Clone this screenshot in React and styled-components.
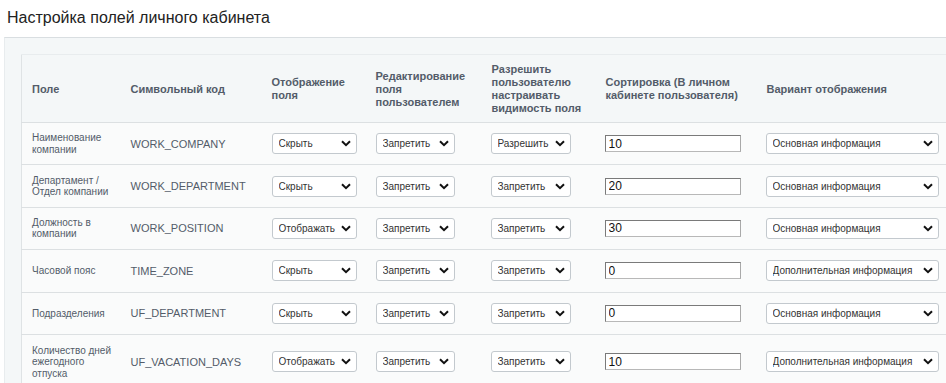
import React from 'react';
import styled, { createGlobalStyle } from 'styled-components';

const GlobalStyle = createGlobalStyle`
  html, body {
    margin: 0;
    padding: 0;
    background: #fff;
    font-family: Arial, "Liberation Sans", sans-serif;
    overflow: hidden;
  }
`;

const Page = styled.div`
  width: 946px;
  height: 383px;
  overflow: hidden;
`;

const Title = styled.h1`
  margin: 0;
  padding: 8px 0 0 7px;
  height: 29px;
  font-size: 16px;
  font-weight: normal;
  color: #222;
  line-height: 20px;
`;

const Panel = styled.div`
  margin-left: 4px;
  border-top: 1px solid #d9dee1;
  border-left: 1px solid #e8ecee;
  background: #f4f7f8;
  padding: 16px 0 0 16px;
  height: 400px;
`;

const Table = styled.table`
  border-collapse: collapse;
  table-layout: fixed;
  width: 935px;
  border-left: 1px solid #dfe3e5;
  border-top: 1px solid #e8ecee;
`;

const HeadCell = styled.th`
  height: 66px;
  padding: 1px 10px 0;
  text-align: left;
  vertical-align: middle;
  font-size: 11px;
  line-height: 13px;
  font-weight: bold;
  color: #535c69;
  border-bottom: 1px solid #dce0e2;
`;

const Row = styled.tr`
  background: #fafbfb;
  height: ${(p) => (p.$tall ? '55px' : '42.4px')};
  & > td {
    border-bottom: 1px solid #dce0e2;
  }
`;

const Cell = styled.td`
  padding: 0 ${(p) => (p.$small ? 4 : 10)}px 0 ${(p) => p.$pl || 10}px;
  vertical-align: middle;
  font-size: ${(p) => (p.$small ? '10px' : '11px')};
  line-height: ${(p) => (p.$small ? '11.5px' : '12px')};
  color: #535c69;
`;

const SelectWrap = styled.div`
  position: relative;
  width: ${(p) => p.$w}px;
  height: 21px;
`;

const Select = styled.select`
  appearance: none;
  width: 100%;
  height: 21px;
  box-sizing: border-box;
  border: 1px solid #c3c9ce;
  border-radius: 3px;
  background: #fff;
  padding: 0 18px 0 6px;
  font-family: Arial, "Liberation Sans", sans-serif;
  font-size: 10px;
  color: #333;
  outline: none;
`;

const Chevron = styled.svg`
  position: absolute;
  right: 6px;
  top: 7px;
  width: 10px;
  height: 7px;
  pointer-events: none;
`;

const Input = styled.input`
  width: 136px;
  height: 17px;
  box-sizing: border-box;
  border: 1px solid #7a7a7a;
  border-right-color: #a9a9a9;
  border-bottom-color: #b8b8b8;
  padding: 0 3px;
  font-family: Arial, "Liberation Sans", sans-serif;
  font-size: 12px;
  color: #111;
  background: #fff;
  outline: none;
`;

const Dropdown = ({ w, value, options }) => (
  <SelectWrap $w={w}>
    <Select defaultValue={value}>
      {options.map((o) => (
        <option key={o}>{o}</option>
      ))}
    </Select>
    <Chevron viewBox="0 0 10 7">
      <path d="M1 1.2 L5 5.2 L9 1.2" fill="none" stroke="#111" strokeWidth="2" />
    </Chevron>
  </SelectWrap>
);

const SHOW = ['Скрыть', 'Отображать'];
const PERM = ['Запретить', 'Разрешить'];
const VIEW = ['Основная информация', 'Дополнительная информация'];

const rows = [
  { name: 'Наименование компании', code: 'WORK_COMPANY', show: 'Скрыть', edit: 'Запретить', vis: 'Разрешить', sort: '10', view: 'Основная информация' },
  { name: 'Департамент / Отдел компании', code: 'WORK_DEPARTMENT', show: 'Скрыть', edit: 'Запретить', vis: 'Запретить', sort: '20', view: 'Основная информация' },
  { name: 'Должность в компании', code: 'WORK_POSITION', show: 'Отображать', edit: 'Запретить', vis: 'Запретить', sort: '30', view: 'Основная информация' },
  { name: 'Часовой пояс', code: 'TIME_ZONE', show: 'Скрыть', edit: 'Запретить', vis: 'Запретить', sort: '0', view: 'Дополнительная информация' },
  { name: 'Подразделения', code: 'UF_DEPARTMENT', show: 'Скрыть', edit: 'Запретить', vis: 'Запретить', sort: '0', view: 'Основная информация' },
  { name: 'Количество дней ежегодного отпуска', code: 'UF_VACATION_DAYS', show: 'Отображать', edit: 'Запретить', vis: 'Запретить', sort: '10', view: 'Дополнительная информация', tall: true },
];

const App = () => {
  return (
    <Page>
      <GlobalStyle />
      <Title>Настройка полей личного кабинета</Title>
      <Panel>
        <Table>
          <colgroup>
            <col style={{ width: 99 }} />
            <col style={{ width: 141 }} />
            <col style={{ width: 104 }} />
            <col style={{ width: 116 }} />
            <col style={{ width: 114 }} />
            <col style={{ width: 161 }} />
            <col style={{ width: 200 }} />
          </colgroup>
          <thead>
            <tr>
              <HeadCell>Поле</HeadCell>
              <HeadCell>Символьный код</HeadCell>
              <HeadCell>Отображение поля</HeadCell>
              <HeadCell>Редактирование поля пользователем</HeadCell>
              <HeadCell>Разрешить пользователю настраивать видимость поля</HeadCell>
              <HeadCell>Сортировка (В личном кабинете пользователя)</HeadCell>
              <HeadCell>Вариант отображения</HeadCell>
            </tr>
          </thead>
          <tbody>
            {rows.map((r) => (
              <Row key={r.code} $tall={r.tall}>
                <Cell $small>{r.name}</Cell>
                <Cell>{r.code}</Cell>
                <Cell>
                  <Dropdown w={85} value={r.show} options={SHOW} />
                </Cell>
                <Cell>
                  <Dropdown w={79} value={r.edit} options={PERM} />
                </Cell>
                <Cell $pl={9}>
                  <Dropdown w={80} value={r.vis} options={PERM} />
                </Cell>
                <Cell $pl={9}>
                  <Input defaultValue={r.sort} />
                </Cell>
                <Cell $pl={9}>
                  <Dropdown w={173} value={r.view} options={VIEW} />
                </Cell>
              </Row>
            ))}
          </tbody>
        </Table>
      </Panel>
    </Page>
  );
};

export default App;
